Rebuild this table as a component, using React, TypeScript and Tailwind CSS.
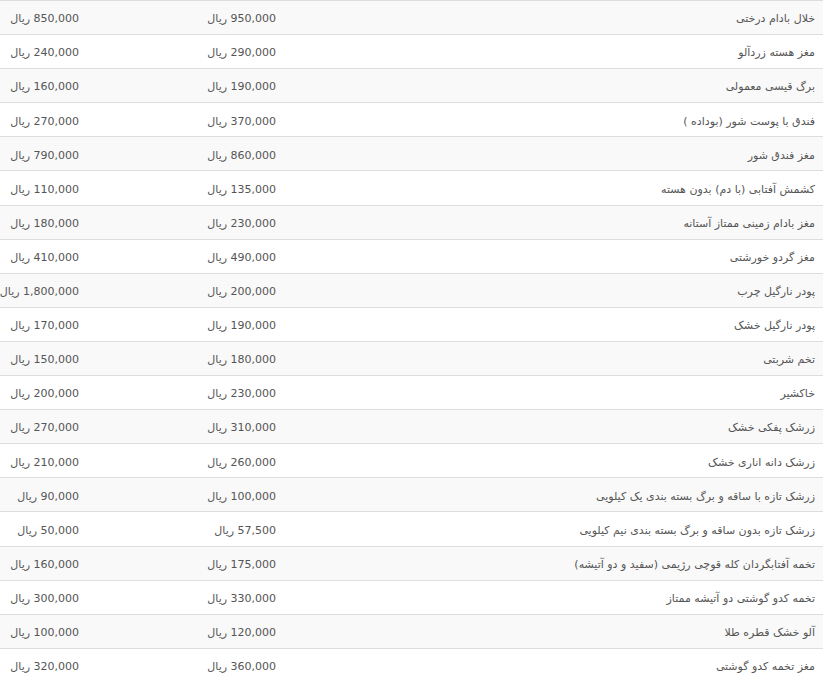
const rows: [string, string, string][] = [
  ["خلال بادام درختی", "950,000", "850,000"],
  ["مغز هسته زردآلو", "290,000", "240,000"],
  ["برگ قیسی معمولی", "190,000", "160,000"],
  ["فندق با پوست شور (بوداده )", "370,000", "270,000"],
  ["مغز فندق شور", "860,000", "790,000"],
  ["کشمش آفتابی (با دم) بدون هسته", "135,000", "110,000"],
  ["مغز بادام زمینی ممتاز آستانه", "230,000", "180,000"],
  ["مغز گردو خورشتی", "490,000", "410,000"],
  ["پودر نارگیل چرب", "200,000", "1,800,000"],
  ["پودر نارگیل خشک", "190,000", "170,000"],
  ["تخم شربتی", "180,000", "150,000"],
  ["خاکشیر", "230,000", "200,000"],
  ["زرشک پفکی خشک", "310,000", "270,000"],
  ["زرشک دانه اناری خشک", "260,000", "210,000"],
  ["زرشک تازه با ساقه و برگ بسته بندی یک کیلویی", "100,000", "90,000"],
  ["زرشک تازه بدون ساقه و برگ بسته بندی نیم کیلویی", "57,500", "50,000"],
  ["تخمه آفتابگردان کله قوچی رژیمی (سفید و دو آتیشه)", "175,000", "160,000"],
  ["تخمه کدو گوشتی دو آتیشه ممتاز", "330,000", "300,000"],
  ["آلو خشک قطره طلا", "120,000", "100,000"],
  ["مغز تخمه کدو گوشتی", "360,000", "320,000"],
];

export default function App() {
  return (
    <div className="w-[832px] h-[685px] overflow-hidden bg-white">
      <table
        dir="rtl"
        className="w-[823px] table-fixed border-collapse text-[11px] text-[#555] font-['DejaVu_Sans',sans-serif]"
      >
        <colgroup>
          <col className="w-[539px]" />
          <col className="w-[197px]" />
          <col className="w-[87px]" />
        </colgroup>
        <tbody>
          {rows.map(([name, price, wholesale], i) => (
            <tr
              key={i}
              className={`h-[34.1px] border-t border-[#dddddd] ${i % 2 === 0 ? "bg-[#f9f9f9]" : "bg-white"}`}
            >
              <td className="px-2 pt-[4px] text-right whitespace-nowrap">{name}</td>
              <td className="px-2 pt-[4px] text-right whitespace-nowrap">{price} ریال</td>
              <td className="px-2 pt-[4px] text-right whitespace-nowrap">{wholesale} ریال</td>
            </tr>
          ))}
        </tbody>
      </table>
    </div>
  );
}
